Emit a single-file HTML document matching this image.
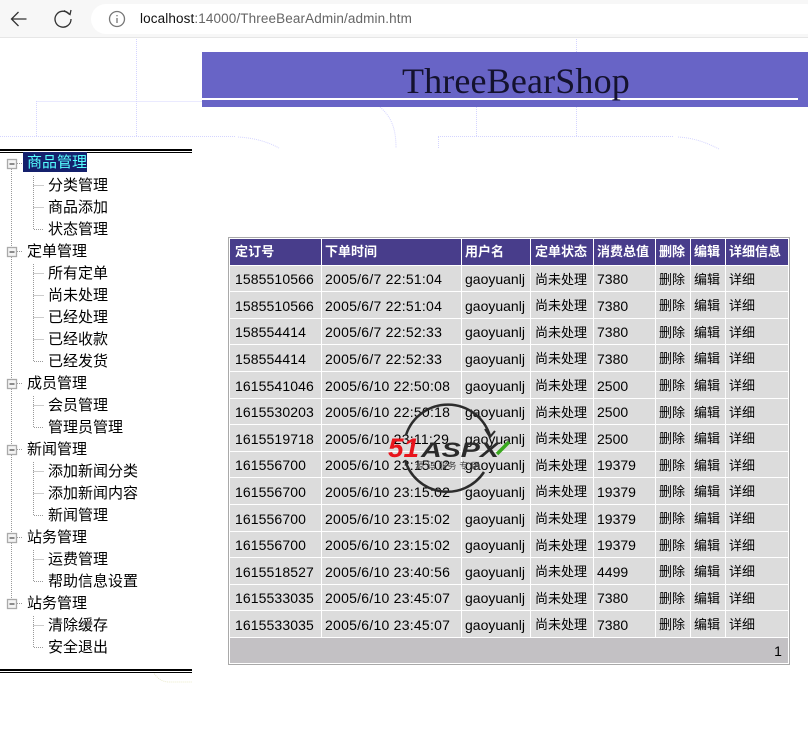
<!DOCTYPE html>
<html lang="zh"><head><meta charset="utf-8"><title>admin</title>
<style>
html,body{margin:0;padding:0;width:808px;height:744px;overflow:hidden;background:#fff}
body{position:relative;font-family:"Liberation Sans","WenQuanYi Zen Hei",sans-serif}
.abs{position:absolute}
#bar{left:0;top:0;width:808px;height:37px;background:#f7f7f7;border-bottom:1px solid #e6e6e6}
#pill{left:91px;top:4px;width:730px;height:30px;background:#fff;border-radius:15px}
#url{left:140px;top:11px;font-size:13.5px;line-height:16px;color:#666;white-space:nowrap;letter-spacing:.12px}
#url b{font-weight:normal;color:#111}
#banner{left:202px;top:52px;width:606px;height:55px;background:#6864c6}
#rule{left:202px;top:98px;width:596px;height:2px;background:#fff}
#title{left:402px;top:59px;font:36px/44px "Liberation Serif",serif;color:#14122e;white-space:nowrap;letter-spacing:.15px}
.r{left:0;width:192px;height:1px;background:#000}
.n{position:absolute;margin-top:1px;font-size:15px;line-height:22px;color:#000;white-space:nowrap;font-family:"Liberation Sans","WenQuanYi Zen Hei","Noto Sans CJK SC",sans-serif}
.l1{left:27px}.l2{left:48px}
#hl{left:23px;top:152px;width:64px;height:20px;background:#14206c}
table{position:absolute;left:228px;top:237px;border:1px solid #a9a9a9;border-spacing:1px;border-collapse:separate;background:#fff;table-layout:fixed;width:562px;font-size:14px;color:#000;font-family:"Liberation Sans","WenQuanYi Zen Hei","Noto Sans CJK SC",sans-serif}
td,th{padding:0 0 0 3px;white-space:nowrap;overflow:hidden;background:#dcdcdc;text-align:left;font-weight:normal;line-height:16px;box-sizing:border-box}
td{padding-top:1px}
th{background:#483d8b;color:#fff;font-size:13px;font-weight:bold;height:26px}
td{height:25px}
tr.t td{height:26px}
td.c{font-size:13px;padding-top:2px}
td:first-child,th:first-child{padding-left:5px;letter-spacing:.1px}
td:nth-child(2){letter-spacing:.25px}
td:nth-child(4),th:nth-child(4){padding-left:4px}
td.f{background:#c3c1c4;text-align:right;padding-right:6px;height:25px}
#wm{left:0;top:0}
</style></head><body>

<svg class="abs" style="left:0;top:38px" width="808" height="120" viewBox="0 38 808 120" fill="none" stroke="#d4d4ff" stroke-width="1" stroke-dasharray="1 1">
<path d="M136.500 39V136M36.500 101.500H202M36.500 101V136M0 136.500H235"/>
<path d="M238 137C255 138 268 142 279 148"/>
<path d="M380 107C390 116 396 126 396 148"/>
<path d="M476.500 107V136M576.500 39V52M576.500 107V136M438 136.500H674M438.500 137V148"/>
<path d="M678 137C695 138 707 143 719 149"/>
</svg>
<svg class="abs" style="left:150px;top:670px" width="44" height="14" fill="none" stroke="#e9e9c9" stroke-width="1" stroke-dasharray="1 1"><path d="M3 2C8 9 12 12 20 12H42"/></svg>

<div class="abs" id="bar"></div>
<div class="abs" id="pill"></div>
<svg class="abs" style="left:0;top:0" width="140" height="38" fill="none" stroke="#333" stroke-width="1.300">
<path d="M26.500 19H11.500M18.500 12L11.500 19L18.500 26"/>
<path d="M69.500 14.500A8 8 0 1 0 71 19"/><path d="M64 10.500L70 14.500L71 10" />
<circle cx="117" cy="19" r="7.500" stroke="#777"/><path d="M117 18V23" stroke="#777"/><path d="M117 15V16.300" stroke="#777"/>
</svg>
<div class="abs" id="url"><b>localhost</b>:14000/ThreeBearAdmin/admin.htm</div>

<div class="abs" id="banner"></div>
<div class="abs" id="rule"></div>
<div class="abs" id="title">ThreeBearShop</div>

<div class="abs r" style="top:149px;height:2px"></div>
<div class="abs r" style="top:152px"></div>
<div class="abs r" style="top:669px;height:2px"></div>
<div class="abs r" style="top:672px"></div>
<div class="abs" id="hl"></div>

<svg class="abs" style="left:0;top:150px" width="50" height="510" viewBox="0 150 50 510" fill="none" stroke="#999" stroke-width="1" stroke-dasharray="1 1">
<path d="M11.500 169V598"/>
<path d="M17 163.500H23M17 251.500H23M17 383.500H23M17 449.500H23M17 537.500H23M17 603.500H23"/>
<path d="M33.500 176V229.500H44M33.500 185.500H44M33.500 207.500H44"/>
<path d="M33.500 264V361.500H44M33.500 273.500H44M33.500 295.500H44M33.500 317.500H44M33.500 339.500H44"/>
<path d="M33.500 396V427.500H44M33.500 405.500H44"/>
<path d="M33.500 462V515.500H44M33.500 471.500H44M33.500 493.500H44"/>
<path d="M33.500 550V581.500H44M33.500 559.500H44"/>
<path d="M33.500 616V647.500H44M33.500 625.500H44"/>
<g stroke-dasharray="none">
<rect x="7.500" y="159.500" width="9" height="9" fill="#f4f4f4" stroke="#aaa" stroke-width="1.300"/><path d="M9.500 164H14.500" stroke="#222"/>
<rect x="7.500" y="247.500" width="9" height="9" fill="#f4f4f4" stroke="#aaa" stroke-width="1.300"/><path d="M9.500 252H14.500" stroke="#222"/>
<rect x="7.500" y="379.500" width="9" height="9" fill="#f4f4f4" stroke="#aaa" stroke-width="1.300"/><path d="M9.500 384H14.500" stroke="#222"/>
<rect x="7.500" y="445.500" width="9" height="9" fill="#f4f4f4" stroke="#aaa" stroke-width="1.300"/><path d="M9.500 450H14.500" stroke="#222"/>
<rect x="7.500" y="533.500" width="9" height="9" fill="#f4f4f4" stroke="#aaa" stroke-width="1.300"/><path d="M9.500 538H14.500" stroke="#222"/>
<rect x="7.500" y="599.500" width="9" height="9" fill="#f4f4f4" stroke="#aaa" stroke-width="1.300"/><path d="M9.500 604H14.500" stroke="#222"/>
</g>
</svg>

<div class="n l1" style="top:152px;color:#5ff;margin-top:0">商品管理</div>
<div class="n l2" style="top:174px">分类管理</div>
<div class="n l2" style="top:196px">商品添加</div>
<div class="n l2" style="top:218px">状态管理</div>
<div class="n l1" style="top:240px">定单管理</div>
<div class="n l2" style="top:262px">所有定单</div>
<div class="n l2" style="top:284px">尚未处理</div>
<div class="n l2" style="top:306px">已经处理</div>
<div class="n l2" style="top:328px">已经收款</div>
<div class="n l2" style="top:350px">已经发货</div>
<div class="n l1" style="top:372px">成员管理</div>
<div class="n l2" style="top:394px">会员管理</div>
<div class="n l2" style="top:416px">管理员管理</div>
<div class="n l1" style="top:438px">新闻管理</div>
<div class="n l2" style="top:460px">添加新闻分类</div>
<div class="n l2" style="top:482px">添加新闻内容</div>
<div class="n l2" style="top:504px">新闻管理</div>
<div class="n l1" style="top:526px">站务管理</div>
<div class="n l2" style="top:548px">运费管理</div>
<div class="n l2" style="top:570px">帮助信息设置</div>
<div class="n l1" style="top:592px">站务管理</div>
<div class="n l2" style="top:614px">清除缓存</div>
<div class="n l2" style="top:636px">安全退出</div>

<table>
<colgroup><col style="width:91px"><col style="width:139px"><col style="width:68px"><col style="width:62px"><col style="width:61px"><col style="width:34px"><col style="width:34px"><col style="width:62px"></colgroup>
<tr><th>定订号</th><th>下单时间</th><th>用户名</th><th>定单状态</th><th>消费总值</th><th>删除</th><th>编辑</th><th>详细信息</th></tr>
<tr><td>1585510566</td><td>2005/6/7 22:51:04</td><td>gaoyuanlj</td><td class="c">尚未处理</td><td>7380</td><td class="c">删除</td><td class="c">编辑</td><td class="c">详细</td></tr>
<tr class="t"><td>1585510566</td><td>2005/6/7 22:51:04</td><td>gaoyuanlj</td><td class="c">尚未处理</td><td>7380</td><td class="c">删除</td><td class="c">编辑</td><td class="c">详细</td></tr>
<tr><td>158554414</td><td>2005/6/7 22:52:33</td><td>gaoyuanlj</td><td class="c">尚未处理</td><td>7380</td><td class="c">删除</td><td class="c">编辑</td><td class="c">详细</td></tr>
<tr class="t"><td>158554414</td><td>2005/6/7 22:52:33</td><td>gaoyuanlj</td><td class="c">尚未处理</td><td>7380</td><td class="c">删除</td><td class="c">编辑</td><td class="c">详细</td></tr>
<tr class="t"><td>1615541046</td><td>2005/6/10 22:50:08</td><td>gaoyuanlj</td><td class="c">尚未处理</td><td>2500</td><td class="c">删除</td><td class="c">编辑</td><td class="c">详细</td></tr>
<tr><td>1615530203</td><td>2005/6/10 22:50:18</td><td>gaoyuanlj</td><td class="c">尚未处理</td><td>2500</td><td class="c">删除</td><td class="c">编辑</td><td class="c">详细</td></tr>
<tr class="t"><td>1615519718</td><td>2005/6/10 23:11:29</td><td>gaoyuanlj</td><td class="c">尚未处理</td><td>2500</td><td class="c">删除</td><td class="c">编辑</td><td class="c">详细</td></tr>
<tr><td>161556700</td><td>2005/6/10 23:15:02</td><td>gaoyuanlj</td><td class="c">尚未处理</td><td>19379</td><td class="c">删除</td><td class="c">编辑</td><td class="c">详细</td></tr>
<tr class="t"><td>161556700</td><td>2005/6/10 23:15:02</td><td>gaoyuanlj</td><td class="c">尚未处理</td><td>19379</td><td class="c">删除</td><td class="c">编辑</td><td class="c">详细</td></tr>
<tr class="t"><td>161556700</td><td>2005/6/10 23:15:02</td><td>gaoyuanlj</td><td class="c">尚未处理</td><td>19379</td><td class="c">删除</td><td class="c">编辑</td><td class="c">详细</td></tr>
<tr><td>161556700</td><td>2005/6/10 23:15:02</td><td>gaoyuanlj</td><td class="c">尚未处理</td><td>19379</td><td class="c">删除</td><td class="c">编辑</td><td class="c">详细</td></tr>
<tr class="t"><td>1615518527</td><td>2005/6/10 23:40:56</td><td>gaoyuanlj</td><td class="c">尚未处理</td><td>4499</td><td class="c">删除</td><td class="c">编辑</td><td class="c">详细</td></tr>
<tr><td>1615533035</td><td>2005/6/10 23:45:07</td><td>gaoyuanlj</td><td class="c">尚未处理</td><td>7380</td><td class="c">删除</td><td class="c">编辑</td><td class="c">详细</td></tr>
<tr class="t"><td>1615533035</td><td>2005/6/10 23:45:07</td><td>gaoyuanlj</td><td class="c">尚未处理</td><td>7380</td><td class="c">删除</td><td class="c">编辑</td><td class="c">详细</td></tr>
<tr><td class="f" colspan="8">1</td></tr>
</table>

<svg class="abs" id="wm" width="808" height="744" fill="none">
<path d="M406 435A44 44 0 0 1 490 436" stroke="#2c2c2c" stroke-width="2.500"/>
<path d="M405 460A44 44 0 0 0 484 472" stroke="#2c2c2c" stroke-width="2.500"/>
<path d="M485 429L490 437L495 431" stroke="#2c2c2c" stroke-width="2"/>
<text x="388" y="457" font-family="Liberation Sans" font-size="27" font-weight="bold" font-style="italic" fill="#e8141c" textLength="31" lengthAdjust="spacingAndGlyphs">51</text>
<text x="421" y="457" font-family="Liberation Sans" font-size="21" font-weight="bold" font-style="italic" fill="#2b2b2b" textLength="78" lengthAdjust="spacingAndGlyphs">ASPX</text>
<path d="M497 454L509 442" stroke="#3aa81e" stroke-width="3.500"/>
<text x="415" y="469" font-family="Liberation Sans,WenQuanYi Zen Hei,sans-serif" font-size="9" fill="#444" textLength="65">源 码 服务 专 用</text>
</svg>
</body></html>
